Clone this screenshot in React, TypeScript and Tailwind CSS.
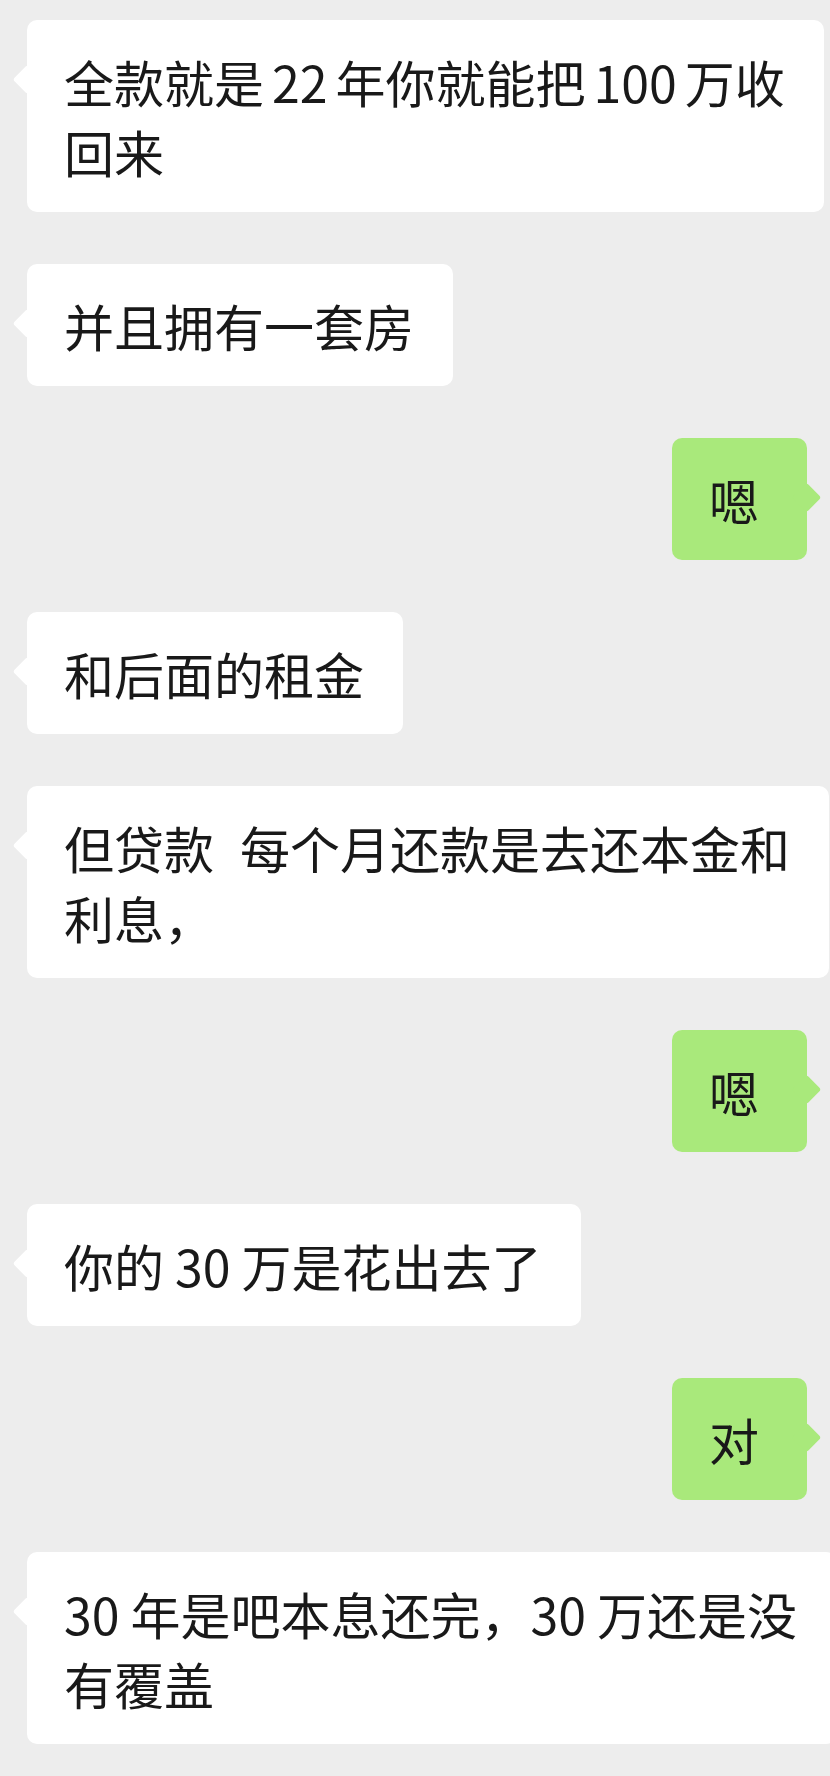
import type { ReactNode } from 'react'

// 聊天记录截图：左侧白色气泡是对方，右侧绿色气泡是自己

type Msg = { id: number; mine: boolean; lines: ReactNode[] }

const Gap = ({ w = 'w-[11px]' }: { w?: string }) => <span className={`inline-block ${w}`} />

const MESSAGES: Msg[] = [
  {
    id: 1,
    mine: false,
    lines: [
      <>全款就是<Gap w="w-[8px]" />22<Gap w="w-[8px]" />年你就能把<Gap w="w-[8px]" />100<Gap w="w-[8px]" />万收</>,
      '回来',
    ],
  },
  { id: 2, mine: false, lines: ['并且拥有一套房'] },
  { id: 3, mine: true, lines: ['嗯'] },
  { id: 4, mine: false, lines: ['和后面的租金'] },
  {
    id: 5,
    mine: false,
    lines: [
      <>但贷款<span className="inline-block w-[26px]" />每个月还款是去还本金和</>,
      '利息，',
    ],
  },
  { id: 6, mine: true, lines: ['嗯'] },
  { id: 7, mine: false, lines: [<>你的<Gap />30<Gap />万是花出去了</>] },
  { id: 8, mine: true, lines: ['对'] },
  {
    id: 9,
    mine: false,
    lines: [
      <>30<Gap />年是吧本息还完，30<Gap />万还是没</>,
      '有覆盖',
    ],
  },
]

function Bubble({ msg }: { msg: Msg }) {
  const color = msg.mine ? 'bg-[#a9e97b]' : 'bg-white'
  return (
    <div className={`relative w-fit rounded-[10px] py-[26px] ${color} ${msg.mine ? 'self-end pl-[37px] pr-[48px]' : 'pl-[37px] pr-[39px]'}`}>
      {/* 气泡小尖角 */}
      <span
        className={`absolute top-[49px] w-[21px] h-[21px] rotate-45 rounded-[3px] ${color} ${
          msg.mine ? 'right-[-10px]' : 'left-[-10px]'
        }`}
      />
      <div className="relative whitespace-nowrap text-[50px] leading-[70px] text-[#191919]">
        {msg.lines.map((l, i) => (
          <div key={i}>{l}</div>
        ))}
      </div>
    </div>
  )
}

export default function App() {
  return (
    <div
      className="w-[830px] min-h-[1776px] overflow-hidden bg-[#ededed]"
      style={{ fontFamily: '"Noto Sans CJK SC", "Noto Sans", sans-serif' }}
    >
      <div className="flex flex-col gap-[52px] pt-[20px] pb-[36px] pl-[27px] pr-[23px]">
        {MESSAGES.map(m => (
          <Bubble key={m.id} msg={m} />
        ))}
      </div>
    </div>
  )
}
